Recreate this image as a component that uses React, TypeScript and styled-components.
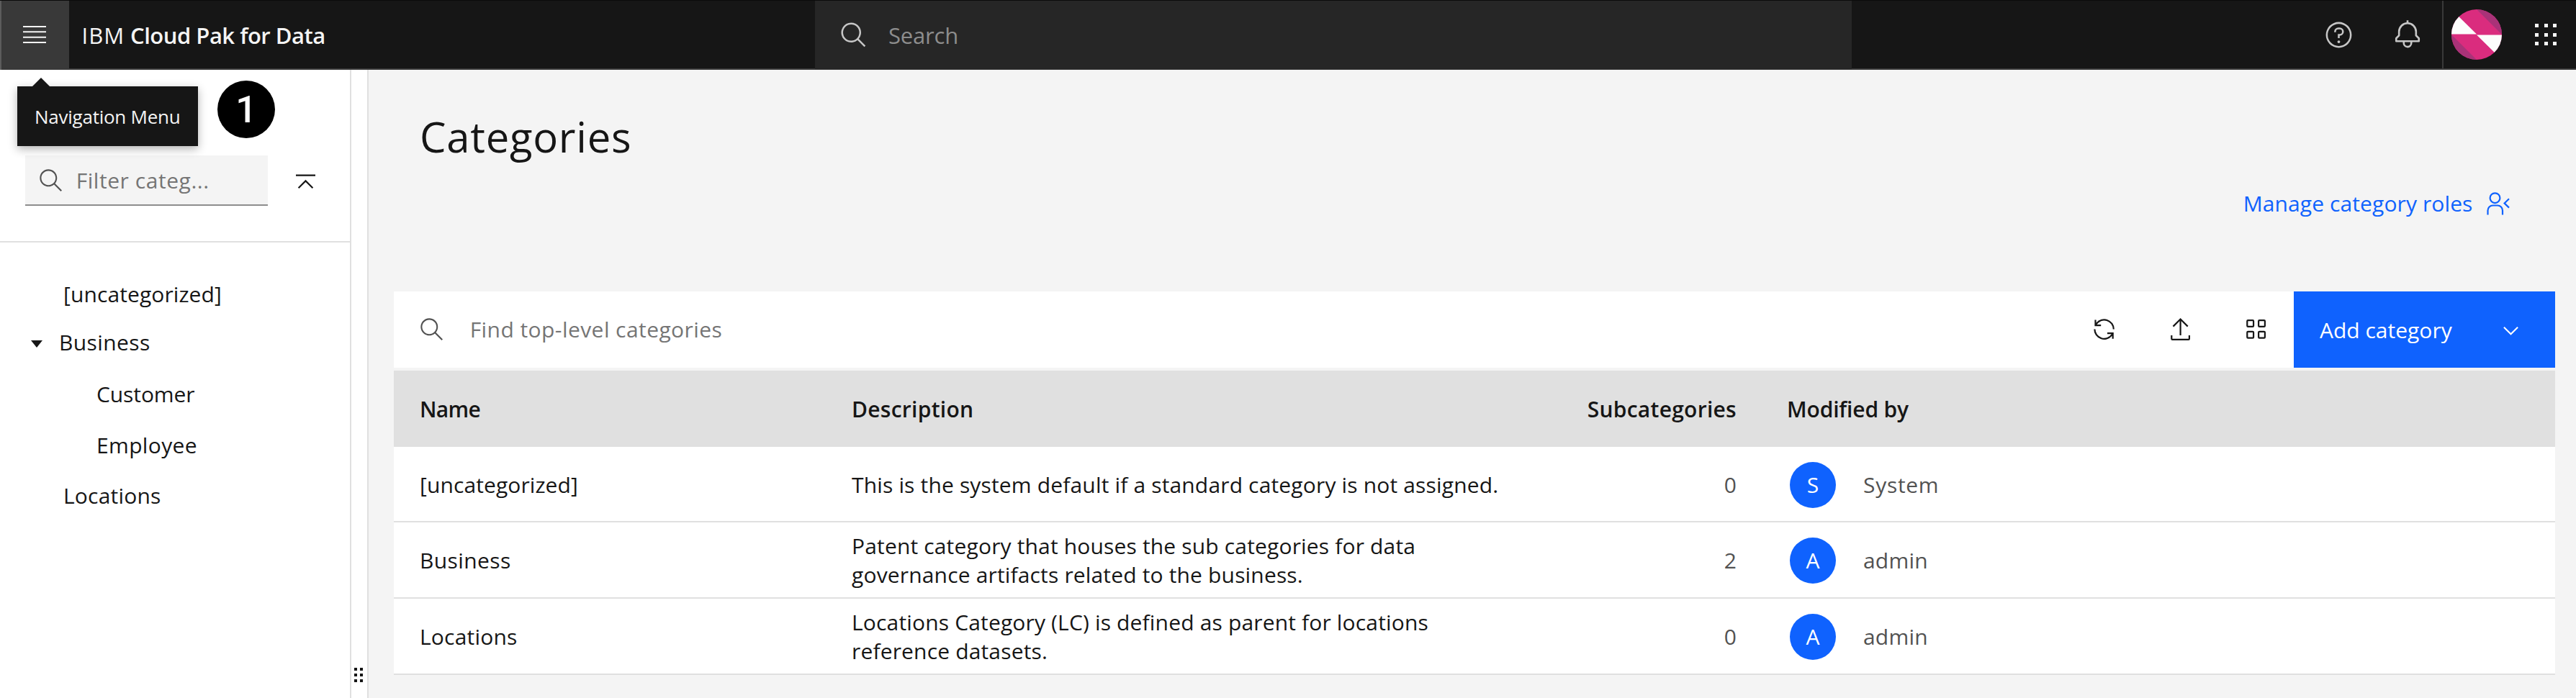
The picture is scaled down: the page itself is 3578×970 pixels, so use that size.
import React from 'react';
import styled, { createGlobalStyle } from 'styled-components';

const Global = createGlobalStyle`
  * { box-sizing: border-box; }
  body { margin: 0; background: #f4f4f4; color: #161616; font-family: 'Open Sans', 'Noto Sans', sans-serif; font-size: 30px; line-height: 40px; }
  svg { display: block; flex: none; }
`;

const Text = styled.span<{ $track?: number }>`
  letter-spacing: ${(p) => p.$track ?? 0}px;
  white-space: nowrap;
`;

/* ---------- header ---------- */
const Header = styled.header`
  position: relative;
  display: flex;
  height: 97px;
  background: #161616;
  border-top: 1px solid #0b0b0b;
  border-bottom: 2px solid #393939;
  color: #f4f4f4;
  font-size: 31px;
`;
const MenuButton = styled.div`
  width: 96px;
  height: 96px;
  padding-left: 30px;
  padding-top: 35px;
  background: #393939;
  border-left: 2px solid #5c5c5c;
`;
const Brand = styled.div`
  display: flex;
  gap: 8px;
  width: 1036px;
  padding: 28px 0 0 17.5px;
  b { font-weight: 600; }
`;
const GlobalSearch = styled.div`
  display: flex;
  align-items: center;
  width: 1440px;
  height: 95px;
  padding-left: 34px;
  gap: 28px;
  background: #262626;
  color: #8d8d8d;
  svg { fill: #c6c6c6; }
`;
const HeaderActions = styled.div`
  display: flex;
  align-items: center;
  margin-left: auto;
  height: 94px;
  fill: #c6c6c6;
`;
const HeaderIcon = styled.div`
  display: flex;
  justify-content: center;
  width: 96px;
`;
const Profile = styled.div`
  display: flex;
  align-items: center;
  height: 94px;
  padding-left: 11px;
  border-left: 2px solid #393939;
`;
const AppSwitcher = styled.div`
  display: grid;
  grid-template-columns: repeat(3, 5px);
  gap: 7.5px;
  margin: 0 27px 0 46px;
`;
const SwitcherDot = styled.i`
  width: 5px;
  height: 5px;
  background: #f4f4f4;
`;
const Tooltip = styled.div`
  position: absolute;
  z-index: 2;
  left: 24px;
  top: 119px;
  width: 251px;
  height: 83px;
  padding: 21px 0 0 24px;
  background: #161616;
  box-shadow: 0 4px 12px rgba(0, 0, 0, 0.3);
  font-size: 26px;
  line-height: 42px;
  letter-spacing: -0.25px;
  &::before {
    content: '';
    position: absolute;
    left: 21px;
    top: -12px;
    border: 12px solid transparent;
    border-width: 0 12px 12px;
    border-bottom-color: #161616;
  }
`;
const StepBadge = styled.div`
  position: absolute;
  z-index: 2;
  left: 302px;
  top: 111px;
  width: 80px;
  height: 80px;
  border-radius: 50%;
  background: #000;
  color: #fff;
  font: 500 52px/82px Roboto, Arial, sans-serif;
  text-align: center;
`;

/* ---------- layout ---------- */
const Body = styled.div`
  display: flex;
  height: 873px;
`;
const Sidebar = styled.aside`
  width: 488px;
  background: #fff;
  border-right: 2px solid #e0e0e0;
`;
const FilterBar = styled.div`
  display: flex;
  align-items: flex-start;
  height: 240px;
  padding: 119px 0 0 35px;
  border-bottom: 2px solid #e0e0e0;
`;
const FilterInput = styled.div`
  display: flex;
  align-items: center;
  width: 337px;
  height: 70px;
  padding: 2px 0 0 18px;
  gap: 17.5px;
  background: #f4f4f4;
  border-bottom: 2px solid #8d8d8d;
  color: #757575;
  svg { fill: #525252; }
`;
const CollapseIcon = styled.svg`
  margin: 26px 0 0 39px;
`;
const Tree = styled.div`
  padding-top: 37.5px;
`;
const TreeRow = styled.div<{ $indent: number; $height?: number; $raise?: number }>`
  display: flex;
  align-items: center;
  height: ${(p) => p.$height ?? 70.6}px;
  padding-left: ${(p) => p.$indent}px;
  padding-bottom: ${(p) => p.$raise ?? 0}px;
`;
const Caret = styled.i`
  margin-right: 23px;
  margin-top: 3px;
  border: 8px solid transparent;
  border-width: 10px 8px 0;
  border-top-color: #161616;
`;
const Splitter = styled.div`
  display: flex;
  align-items: flex-end;
  width: 24px;
  padding: 0 0 22px 4px;
  background: #fff;
  border-right: 2px solid #e0e0e0;
`;
const Grip = styled.div`
  display: grid;
  grid-template-columns: 4px 4px;
  gap: 4px;
`;
const GripDot = styled.i`
  width: 4px;
  height: 4px;
  background: #161616;
`;
const Main = styled.main`
  flex: 1;
  padding: 63px 29px 0 35px;
`;
const Title = styled.h1`
  margin: 0 0 44px 36px;
  font-size: 58px;
  font-weight: 400;
  line-height: 60px;
  letter-spacing: 0.74px;
`;
const ManageLink = styled.a`
  display: flex;
  justify-content: flex-end;
  align-items: center;
  height: 38px;
  margin: 0 62px 103px 0;
  color: #0f62fe;
  gap: 19.5px;
`;

/* ---------- toolbar ---------- */
const Toolbar = styled.div`
  display: flex;
  height: 106px;
  margin-bottom: 4px;
  background: #fff;
`;
const TableSearch = styled.div`
  display: flex;
  flex: 1;
  align-items: center;
  padding-left: 35px;
  gap: 35.5px;
  color: #757575;
  svg { fill: #525252; }
`;
const ToolButton = styled.div`
  display: flex;
  align-items: center;
  justify-content: center;
  width: 105.2px;
`;
const AddButton = styled.div`
  display: flex;
  align-items: center;
  justify-content: space-between;
  width: 363px;
  padding: 2px 45px 0 36px;
  background: #0f62fe;
  color: #fff;
`;

/* ---------- table ---------- */
const Row = styled.div`
  display: grid;
  grid-template-columns: 600px 950px 279px 1fr;
  align-items: center;
  height: 106px;
  padding: 2px 0 0 36px;
  background: #fff;
  border-bottom: 2px solid #e0e0e0;
`;
const HeadRow = styled(Row)`
  background: #e0e0e0;
  border: 0;
  font-weight: 600;
`;
const FirstRow = styled(Row)`
  height: 105px;
`;
const Cell = styled.div<{ $right?: boolean }>`
  text-align: ${(p) => (p.$right ? 'right' : 'left')};
`;
const Description = styled.div`
  line-height: 39.6px;
  letter-spacing: 0.16px;
  white-space: pre;
`;
const Count = styled(Cell)`
  color: #525252;
`;
const Person = styled.div`
  display: flex;
  align-items: center;
  margin-left: 74px;
  gap: 38px;
  color: #525252;
`;
const PersonHead = styled.div`
  margin-left: 70px;
`;
const Avatar = styled.div`
  width: 64px;
  height: 64px;
  border-radius: 50%;
  background: #0f62fe;
  color: #fff;
  line-height: 63px;
  text-align: center;
`;

const SearchIcon = ({ size }: { size: number }) => (
  <svg width={size} height={size} viewBox="0 0 16 16">
    <path d="M15,14.3L10.7,10c1.9-2.3,1.6-5.8-0.7-7.7S4.2,0.7,2.3,3S0.7,8.8,3,10.7c2,1.7,5,1.7,7,0l4.3,4.3L15,14.3z M2,6.5C2,4,4,2,6.5,2S11,4,11,6.5S9,11,6.5,11S2,9,2,6.5z" />
  </svg>
);

const HeaderSearchIcon = () => (
  <svg width="40" height="40" viewBox="0 0 32 32">
    <path d="M29,27.5859l-7.5521-7.5521a11.0177,11.0177,0,1,0-1.4141,1.4141L27.5859,29ZM4,13a9,9,0,1,1,9,9A9.01,9.01,0,0,1,4,13Z" />
  </svg>
);

const HelpIcon = () => (
  <svg width="41" height="41" viewBox="0 0 32 32">
    <path d="M16,2A14,14,0,1,0,30,16,14,14,0,0,0,16,2Zm0,26A12,12,0,1,1,28,16,12,12,0,0,1,16,28Z" />
    <circle cx="16" cy="23.5" r="1.5" />
    <path d="M17,8H15.5A4.49,4.49,0,0,0,11,12.5V13h2v-.5A2.5,2.5,0,0,1,15.5,10H17a2.5,2.5,0,0,1,0,5H15v4.5h2V17a4.5,4.5,0,0,0,0-9Z" />
  </svg>
);

const BellIcon = () => (
  <svg width="42" height="42" viewBox="0 0 32 32">
    <path d="M28.7071,19.293,26,16.5859V13a10.0136,10.0136,0,0,0-9-9.9492V1H15V3.0508A10.0136,10.0136,0,0,0,6,13v3.5859L3.2929,19.293A1,1,0,0,0,3,20v3a1,1,0,0,0,1,1h7v.7768a5.152,5.152,0,0,0,4.5,5.1987A5.0057,5.0057,0,0,0,21,25V24h7a1,1,0,0,0,1-1V20A1,1,0,0,0,28.7071,19.293ZM19,25a3,3,0,0,1-6,0V24h6Zm8-3H5V20.4141L7.707,17.707A1,1,0,0,0,8,17V13a8,8,0,0,1,16,0v4a1,1,0,0,0,.293.707L27,20.4141Z" />
  </svg>
);

const ProfilePicture = () => (
  <svg width="70" height="70" viewBox="0 0 70 70">
    <circle cx="35" cy="35" r="35" fill="#da2c7e" />
    <path d="M35 0A35 35 0 0 1 70 35Z" fill="#a93278" />
    <path d="M0 35A35 35 0 0 0 35 70Z" fill="#a93278" />
    <path d="M35 34.5H0A35 35 0 0 1 10.4 10.2Z" fill="#fcfcfc" />
    <path d="M35 35.5H70A35 35 0 0 1 59.6 59.8Z" fill="#fcfcfc" />
  </svg>
);

const tree = [
  { label: '[uncategorized]', indent: 88, height: 68.8, track: 0.1 },
  { label: 'Business', indent: 43, height: 69.6, raise: 4, track: 0.4, open: true },
  { label: 'Customer', indent: 134, track: -0.1 },
  { label: 'Employee', indent: 134, track: 0.35 },
  { label: 'Locations', indent: 88, track: 0.2 },
];

const rows = [
  { name: '[uncategorized]', track: 0.1, text: 'This is the system default if a standard category is not assigned.', count: 0, by: 'System', byTrack: 0.7 },
  { name: 'Business', track: 0.4, text: 'Patent category that houses the sub categories for data\ngovernance artifacts related to the business.', count: 2, by: 'admin', byTrack: 0.2 },
  { name: 'Locations', track: 0.2, text: 'Locations Category (LC) is defined as parent for locations\nreference datasets.', count: 0, by: 'admin', byTrack: 0.2 },
];

export default function App() {
  return (
    <>
      <Global />
      <Header>
        <MenuButton>
          <svg width="32" height="24" viewBox="0 0 32 24" fill="#f4f4f4">
            <path d="M0 0h32v2H0zM0 7.3h32v2H0zM0 14.7h32v2H0zM0 22h32v2H0z" />
          </svg>
        </MenuButton>
        <Brand>
          <Text $track={1}>IBM</Text>
          <b><Text $track={-0.5}>Cloud Pak for Data</Text></b>
        </Brand>
        <GlobalSearch>
          <HeaderSearchIcon />
          <Text $track={-0.2}>Search</Text>
        </GlobalSearch>
        <HeaderActions>
          <HeaderIcon><HelpIcon /></HeaderIcon>
          <HeaderIcon><BellIcon /></HeaderIcon>
          <Profile>
            <ProfilePicture />
            <AppSwitcher>
              {Array.from({ length: 9 }, (_, i) => <SwitcherDot key={i} />)}
            </AppSwitcher>
          </Profile>
        </HeaderActions>
        <Tooltip>Navigation Menu</Tooltip>
        <StepBadge>1</StepBadge>
      </Header>
      <Body>
        <Sidebar>
          <FilterBar>
            <FilterInput>
              <SearchIcon size={35.2} />
              <Text $track={0.55}>Filter categ...</Text>
            </FilterInput>
            <CollapseIcon width="27" height="21" viewBox="0 0 27 21" fill="none" stroke="#161616" strokeWidth="2.2">
              <path d="M0 1.6H27M3.6 19.2L13.5 9.4L23.4 19.2" />
            </CollapseIcon>
          </FilterBar>
          <Tree>
            {tree.map((t) => (
              <TreeRow key={t.label} $indent={t.indent} $height={t.height} $raise={t.raise}>
                {t.open && <Caret />}
                <Text $track={t.track}>{t.label}</Text>
              </TreeRow>
            ))}
          </Tree>
        </Sidebar>
        <Splitter>
          <Grip>{Array.from({ length: 6 }, (_, i) => <GripDot key={i} />)}</Grip>
        </Splitter>
        <Main>
          <Title>Categories</Title>
          <ManageLink>
            <Text $track={0.1}>Manage category roles</Text>
            <svg width="33" height="34" viewBox="0 0 33 34" fill="none" stroke="#0f62fe" strokeWidth="2.2">
              <circle cx="11.5" cy="9.2" r="6.9" />
              <path d="M1.5 32.6V26.5a7 7 0 0 1 7-7H15a7 7 0 0 1 7 7V32.6M31 10.2L24.6 16.4L31 22.6" />
            </svg>
          </ManageLink>
          <Toolbar>
            <TableSearch>
              <SearchIcon size={35.2} />
              <Text $track={0.43}>Find top-level categories</Text>
            </TableSearch>
            <ToolButton>
              <svg width="35.2" height="35.2" viewBox="0 0 32 32" fill="#161616">
                <path d="M12,10H6.78A11,11,0,0,1,27,16h2A13,13,0,0,0,6,7.68V4H4v8h8Z" />
                <path d="M20,22h5.22A11,11,0,0,1,5,16H3a13,13,0,0,0,23,8.32V28h2V20H20Z" />
              </svg>
            </ToolButton>
            <ToolButton>
              <svg width="35.2" height="35.2" viewBox="0 0 16 16" fill="none" stroke="#161616">
                <path d="M8 1.5V11.8M3.4 6.2L8 1.6L12.6 6.2M2.4 11.8V14a.5.5 0 0 0 .5.5h10.2a.5.5 0 0 0 .5-.5V11.8" />
              </svg>
            </ToolButton>
            <ToolButton>
              <svg width="35.2" height="35.2" viewBox="0 0 16 16" fill="none" stroke="#161616">
                <rect x="2.4" y="2.3" width="4" height="4" rx=".5" />
                <rect x="9.6" y="2.3" width="4" height="4" rx=".5" />
                <rect x="2.4" y="9.5" width="4" height="4" rx=".5" />
                <rect x="9.6" y="9.5" width="4" height="4" rx=".5" />
              </svg>
            </ToolButton>
            <AddButton>
              <Text>Add category</Text>
              <svg width="33" height="33" viewBox="0 0 16 16" fill="#fff">
                <path d="M8 11L3 6 3.7 5.3 8 9.6 12.3 5.3 13 6z" />
              </svg>
            </AddButton>
          </Toolbar>
          <HeadRow>
            <Cell><Text $track={-0.7}>Name</Text></Cell>
            <Cell><Text $track={0.27}>Description</Text></Cell>
            <Cell $right><Text $track={0.27}>Subcategories</Text></Cell>
            <PersonHead><Text $track={-0.16}>Modified by</Text></PersonHead>
          </HeadRow>
          {rows.map((r, i) => {
            const Line = i === 0 ? FirstRow : Row;
            return (
              <Line key={r.name}>
                <Cell><Text $track={r.track}>{r.name}</Text></Cell>
                <Description>{r.text}</Description>
                <Count $right>{r.count}</Count>
                <Person>
                  <Avatar>{r.by[0].toUpperCase()}</Avatar>
                  <Text $track={r.byTrack}>{r.by}</Text>
                </Person>
              </Line>
            );
          })}
        </Main>
      </Body>
    </>
  );
}
